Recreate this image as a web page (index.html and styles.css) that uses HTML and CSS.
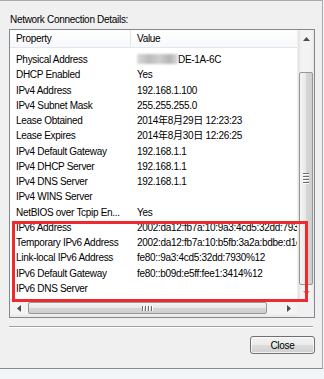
FILE: index.html
```html
<!DOCTYPE html>
<html lang="en">
<head>
    <meta charset="UTF-8">
    <title>Network Connection Details</title>
    <link rel="stylesheet" href="styles.css">
</head>
<body>
    <div class="window">
        <div class="label">Network Connection Details:</div>

        <div class="listbox">
            <div class="list">
                <div class="header">
                    <div class="cell prop">Property</div>
                    <div class="cell val">Value</div>
                </div>
                <div class="rows">
                    <div class="row"><span class="cell prop">Physical Address</span><span class="cell val"><span class="masked"></span>DE-1A-6C</span></div>
                    <div class="row"><span class="cell prop">DHCP Enabled</span><span class="cell val">Yes</span></div>
                    <div class="row"><span class="cell prop">IPv4 Address</span><span class="cell val">192.168.1.100</span></div>
                    <div class="row"><span class="cell prop">IPv4 Subnet Mask</span><span class="cell val">255.255.255.0</span></div>
                    <div class="row"><span class="cell prop">Lease Obtained</span><span class="cell val">2014年8月29日 12:23:23</span></div>
                    <div class="row"><span class="cell prop">Lease Expires</span><span class="cell val">2014年8月30日 12:26:25</span></div>
                    <div class="row"><span class="cell prop">IPv4 Default Gateway</span><span class="cell val">192.168.1.1</span></div>
                    <div class="row"><span class="cell prop">IPv4 DHCP Server</span><span class="cell val">192.168.1.1</span></div>
                    <div class="row"><span class="cell prop">IPv4 DNS Server</span><span class="cell val">192.168.1.1</span></div>
                    <div class="row"><span class="cell prop">IPv4 WINS Server</span><span class="cell val"></span></div>
                    <div class="row"><span class="cell prop">NetBIOS over Tcpip En...</span><span class="cell val">Yes</span></div>
                    <div class="row"><span class="cell prop">IPv6 Address</span><span class="cell val">2002:da12:fb7a:10:9a3:4cd5:32dd:7930</span></div>
                    <div class="row"><span class="cell prop">Temporary IPv6 Address</span><span class="cell val">2002:da12:fb7a:10:b5fb:3a2a:bdbe:d1c4</span></div>
                    <div class="row"><span class="cell prop">Link-local IPv6 Address</span><span class="cell val">fe80::9a3:4cd5:32dd:7930%12</span></div>
                    <div class="row"><span class="cell prop">IPv6 Default Gateway</span><span class="cell val">fe80::b09d:e5ff:fee1:3414%12</span></div>
                    <div class="row"><span class="cell prop">IPv6 DNS Server</span><span class="cell val"></span></div>
                </div>
            </div>

            <div class="vscroll">
                <div class="arrow">
                    <svg width="7" height="4" viewBox="0 0 7 4"><polygon points="0,4 3.5,0 7,4" fill="#4d4d4d"/></svg>
                </div>
                <div class="vtrack-top"></div>
                <div class="vthumb">
                    <span class="grip"></span><span class="grip"></span><span class="grip"></span><span class="grip"></span>
                </div>
                <div class="arrow down">
                    <svg width="7" height="4" viewBox="0 0 7 4"><polygon points="0,0 3.5,4 7,0" fill="#9a9a9a"/></svg>
                </div>
            </div>

            <div class="hscroll">
                <div class="arrow">
                    <svg width="4" height="7" viewBox="0 0 4 7"><polygon points="4,0 0,3.5 4,7" fill="#4d4d4d"/></svg>
                </div>
                <div class="hthumb">
                    <span class="grip"></span><span class="grip"></span><span class="grip"></span><span class="grip"></span>
                </div>
                <div class="htrack-end"></div>
                <div class="arrow">
                    <svg width="4" height="7" viewBox="0 0 4 7"><polygon points="0,0 4,3.5 0,7" fill="#4d4d4d"/></svg>
                </div>
            </div>

            <div class="corner"></div>

            <!-- annotation around the IPv6 rows -->
            <div class="highlight"></div>
        </div>

        <div class="separator"></div>

        <div class="buttons">
            <button class="btn">Close</button>
        </div>
    </div>
</body>
</html>
```

FILE: styles.css
```css
body {
    margin: 0;
    background: #f2f6f8;
    font-family: "Liberation Sans", Arial, "Noto Sans CJK SC", sans-serif;
    font-size: 10px;
    letter-spacing: -0.3px;
    color: #000;
}

.window {
    box-sizing: border-box;
    width: 323px;
    height: 369px;
    background: #f0f0f0;
    border-top: 1px solid #a9a9a9;
    border-right: 1px solid #a9a9a9;
    border-bottom: 1px solid #8a8a8a;
    padding: 13px 7px 0 9px;
}

.label {
    height: 12px;
    line-height: 12px;
    padding-left: 1px;
    margin-bottom: 3px;
}

/* list view */
.listbox {
    position: relative;
    box-sizing: border-box;
    width: 306px;
    height: 289px;
    border: 1px solid #828790;
    background: #fff;
    display: grid;
    grid-template-columns: 287px 17px;
    grid-template-rows: 269px 18px;
}

.list {
    overflow: hidden;
    white-space: nowrap;
}

.header {
    display: flex;
    height: 17px;
    line-height: 17px;
    border-bottom: 1px solid #e3e8ee;
    background: linear-gradient(#ffffff, #f7f8fa);
}
.header .prop {
    border-right: 1px solid #e5e5e5;
}

.cell {
    flex: none;
    padding-left: 6px;
    box-sizing: border-box;
}
.cell.prop { width: 121px; }
.cell.val { width: 400px; }

.rows {
    padding-top: 4px;
}
.row {
    display: flex;
    height: 15.27px;
    line-height: 15.27px;
}

.masked {
    display: inline-block;
    width: 41px;
    height: 10px;
    vertical-align: -1px;
    background: linear-gradient(to right, #dadada, #bcbcbc 30%, #cfcfcf 55%, #b4b4b4 80%, #dcdcdc);
    filter: blur(1px);
}

/* scrollbars */
.vscroll {
    display: flex;
    flex-direction: column;
    background: linear-gradient(to right, #e2e2e2, #f3f3f3 20%, #f3f3f3 80%, #e8e8e8);
    border-left: 1px solid #f0f0f0;
}
.arrow {
    flex: 0 0 17px;
    display: flex;
    align-items: center;
    justify-content: center;
}
.arrow.down {
    flex-basis: 16px;
    margin-top: auto;
}
.vtrack-top {
    flex: 0 0 25px;
}
.vthumb {
    flex: 0 0 211px;
    margin: 0 1px;
    border: 1px solid #979797;
    border-radius: 2px;
    background: linear-gradient(to right, #f4f4f4, #e9e9e9 50%, #d6d6d6 51%, #cfcfcf);
    display: flex;
    flex-direction: column;
    align-items: center;
    justify-content: center;
    gap: 1px;
}
.vthumb .grip {
    width: 6px;
    height: 1px;
    background: #6e6e6e;
    border-bottom: 1px solid #fff;
}

.hscroll {
    display: flex;
    background: linear-gradient(#e2e2e2, #f3f3f3 20%, #f3f3f3 80%, #e8e8e8);
}
.hthumb {
    flex: 0 0 237px;
    margin: 3px 0 3px 1px;
    border: 1px solid #979797;
    border-radius: 2px;
    background: linear-gradient(#f4f4f4, #e9e9e9 50%, #d6d6d6 51%, #cfcfcf);
    display: flex;
    align-items: center;
    justify-content: center;
    gap: 1px;
}
.hthumb .grip {
    width: 1px;
    height: 5px;
    background: #6e6e6e;
    border-right: 1px solid #fff;
}
.htrack-end {
    flex: 1;
}

.corner {
    background: #f0f0f0;
}

.highlight {
    position: absolute;
    left: 2px;
    top: 191px;
    width: 296px;
    height: 81px;
    box-sizing: border-box;
    border: 3px solid #ee2a2f;
}

/* bottom area */
.separator {
    width: 304px;
    margin-top: 8px;
    border-top: 1px solid #a0a0a0;
    border-bottom: 1px solid #ffffff;
}

.buttons {
    display: flex;
    justify-content: flex-end;
    margin-top: 8px;
}
.btn {
    width: 65px;
    height: 18px;
    padding: 0;
    font-family: inherit;
    font-size: 10px;
    letter-spacing: -0.3px;
    color: #000;
    border: 1px solid #707070;
    border-radius: 3px;
    background: linear-gradient(#f2f2f2, #ebebeb 50%, #dddddd 51%, #cfcfcf);
    box-shadow: inset 0 0 0 1px rgba(255, 255, 255, 0.7);
}
```
